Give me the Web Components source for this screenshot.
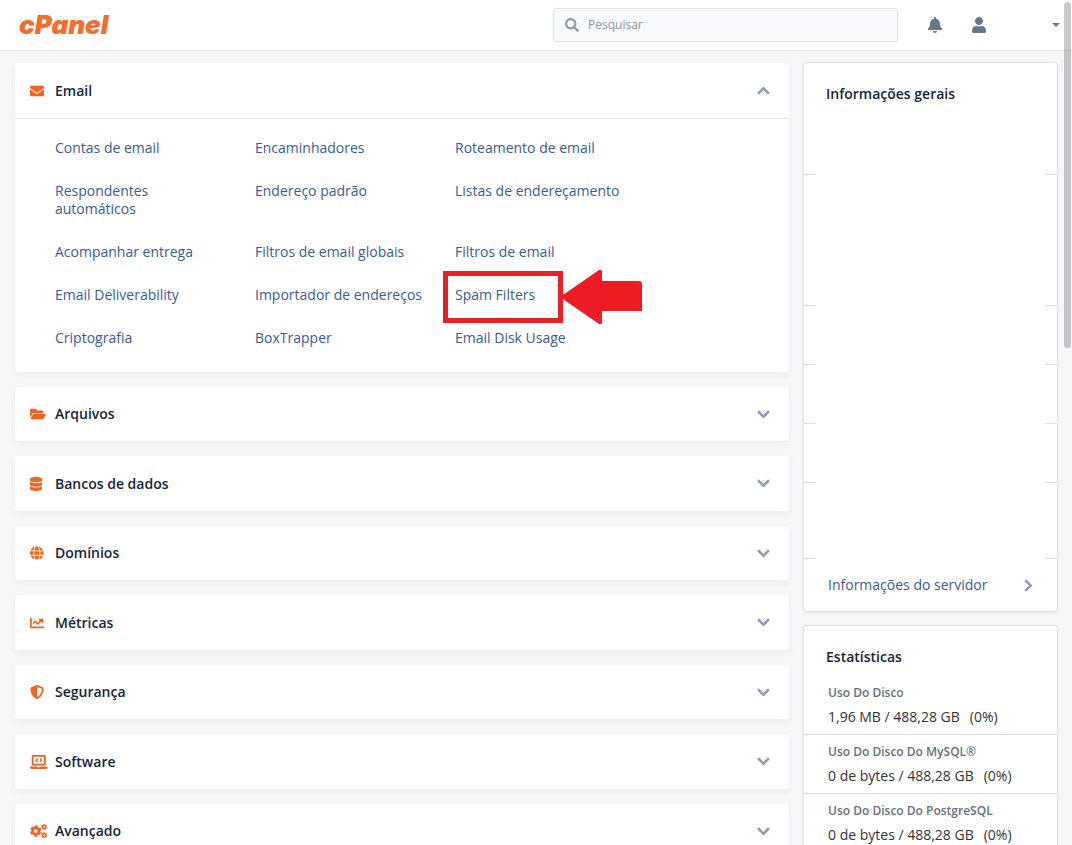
<!DOCTYPE html>
<html lang="pt-BR">
<head>
<meta charset="utf-8">
<meta name="viewport" content="width=device-width, initial-scale=1">
<title>cPanel</title>
<style>
  html, body { height: 100%; }
  body {
    margin: 0;
    overflow: hidden;
    background: #f6f7f9;
    color: #333;
    font: 14px/18px "Open Sans", "Noto Sans", sans-serif;
    --link: #3a5a96;
    --ink: #142538;
    --brand: #f4621f;
    --muted: #8f9bb3;
    --line: #e3e5e8;
  }
</style>
</head>
<body>
<cp-app>
  <cp-header slot="header"></cp-header>

  <cp-section icon="mail" heading="Email" open>
    <cp-link>Contas de email</cp-link>
    <cp-link>Encaminhadores</cp-link>
    <cp-link>Roteamento de email</cp-link>
    <cp-link>Respondentes automáticos</cp-link>
    <cp-link>Endereço padrão</cp-link>
    <cp-link>Listas de endereçamento</cp-link>
    <cp-link>Acompanhar entrega</cp-link>
    <cp-link>Filtros de email globais</cp-link>
    <cp-link>Filtros de email</cp-link>
    <cp-link>Email Deliverability</cp-link>
    <cp-link>Importador de endereços</cp-link>
    <cp-link marked>Spam Filters</cp-link>
    <cp-link>Criptografia</cp-link>
    <cp-link>BoxTrapper</cp-link>
    <cp-link>Email Disk Usage</cp-link>
  </cp-section>
  <cp-section icon="folder" heading="Arquivos"></cp-section>
  <cp-section icon="database" heading="Bancos de dados"></cp-section>
  <cp-section icon="globe" heading="Domínios"></cp-section>
  <cp-section icon="chart" heading="Métricas"></cp-section>
  <cp-section icon="shield" heading="Segurança"></cp-section>
  <cp-section icon="laptop" heading="Software"></cp-section>
  <cp-section icon="cogs" heading="Avançado"></cp-section>

  <cp-panel slot="aside" heading="Informações gerais">
    <cp-general-info></cp-general-info>
  </cp-panel>
  <cp-panel slot="aside" heading="Estatísticas">
    <cp-stat label="Uso Do Disco" value="1,96 MB / 488,28 GB" percent="(0%)"></cp-stat>
    <cp-stat label="Uso Do Disco Do MySQL®" value="0 de bytes / 488,28 GB" percent="(0%)"></cp-stat>
    <cp-stat label="Uso Do Disco Do PostgreSQL" value="0 de bytes / 488,28 GB" percent="(0%)"></cp-stat>
  </cp-panel>
</cp-app>

<script>
const ICONS = {
  mail: ['0 0 512 512', '<path d="M502.3 190.8c3.9-3.1 9.7-.2 9.7 4.7V400c0 26.5-21.5 48-48 48H48c-26.5 0-48-21.5-48-48V195.6c0-5 5.7-7.8 9.7-4.7 22.4 17.4 52.1 39.5 154.1 113.6 21.1 15.4 56.7 47.8 92.2 47.6 35.7.3 72-32.8 92.3-47.6 102-74.1 131.6-96.3 154-113.7zM256 320c23.2.4 56.6-29.2 73.4-41.4 132.7-96.3 142.8-104.7 173.4-128.7 5.8-4.5 9.2-11.5 9.2-18.9v-19c0-26.5-21.5-48-48-48H48c-26.5 0-48 21.5-48 48v19c0 7.4 3.4 14.3 9.2 18.9 30.6 23.9 40.7 32.4 173.4 128.7 16.8 12.2 50.2 41.8 73.4 41.4z"/>'],
  folder: ['0 0 576 512', '<path d="M572.7 292.1L500.3 416.2A64 64 0 0 1 445 448H45c-18.5 0-30-20.1-20.7-36.1l72.4-124.1A64 64 0 0 1 152 256h400c18.5 0 30 20.1 20.7 36.1zM152 224h328v-48c0-26.5-21.5-48-48-48H272l-64-64H48C21.5 64 0 85.5 0 112v278l69.1-118.4C86.2 242.3 118 224 152 224z"/>'],
  database: ['0 0 448 512', '<path d="M448 73.1v45.8C448 159.1 347.7 192 224 192S0 159.1 0 118.9V73.1C0 32.9 100.3 0 224 0s224 32.9 224 73.1zM448 176v102.9C448 319.1 347.7 352 224 352S0 319.1 0 278.9V176c48.1 33.1 136.2 48.6 224 48.6S399.9 209.1 448 176zm0 160v102.9C448 479.1 347.7 512 224 512S0 479.1 0 438.9V336c48.1 33.1 136.2 48.6 224 48.6S399.9 369.1 448 336z"/>'],
  globe: ['0 0 496 512', '<path d="M336.5 160C322 70.7 287.8 8 248 8s-74 62.7-88.5 152h177zM152 256c0 22.2 1.2 43.5 3.3 64h185.3c2.1-20.5 3.3-41.8 3.3-64s-1.2-43.5-3.3-64H155.3c-2.1 20.5-3.3 41.8-3.3 64zm324.7-96c-28.6-67.9-86.5-120.4-158-141.6 24.4 33.8 41.2 84.7 50 141.6h108zM177.2 18.4C105.8 39.6 47.8 92.1 19.3 160h108c8.7-56.9 25.5-107.8 49.9-141.6zM487.4 192H372.7c2.1 21 3.3 42.5 3.3 64s-1.2 43-3.3 64h114.6c5.5-20.5 8.6-41.8 8.6-64s-3.1-43.5-8.5-64zM120 256c0-21.5 1.2-43 3.3-64H8.6C3.2 212.5 0 233.8 0 256s3.2 43.5 8.6 64h114.6c-2-21-3.2-42.5-3.2-64zm39.5 96c14.5 89.3 48.7 152 88.5 152s74-62.7 88.5-152h-177zm159.3 141.6c71.4-21.2 129.4-73.7 158-141.6h-108c-8.8 56.9-25.6 107.8-50 141.6zM19.3 352c28.6 67.9 86.5 120.4 158 141.6-24.4-33.8-41.2-84.7-50-141.6h-108z"/>'],
  chart: ['0 0 512 512', '<path d="M496 384H64V80c0-8.8-7.2-16-16-16H16C7.2 64 0 71.2 0 80v336c0 17.7 14.3 32 32 32h464c8.8 0 16-7.2 16-16v-32c0-8.8-7.2-16-16-16zM464 96H345.9c-21.4 0-32 25.9-17 41l32.4 32.4L288 242.8l-73.4-73.4c-12.5-12.5-32.8-12.5-45.3 0l-68.6 68.7c-6.3 6.2-6.3 16.4 0 22.6l22.6 22.6c6.3 6.3 16.4 6.3 22.6 0l46.1-46 73.4 73.3c12.5 12.5 32.7 12.5 45.2 0l96-96 32.4 32.4c15.1 15.2 41 4.4 41-16.9V112c0-8.8-7.2-16-16-16z"/>'],
  shield: ['0 0 512 512', '<path d="M466.5 83.7l-192-80a48.2 48.2 0 0 0-36.9 0l-192 80C27.7 91.1 16 108.6 16 128c0 198.5 114.5 335.7 221.5 380.3 11.8 4.9 25.1 4.9 36.9 0C360.1 472.6 496 349.3 496 128c0-19.4-11.7-36.9-29.5-44.3zM256.1 446.3l-.1-381 175.9 73.3c-3.3 151.4-82.1 261.1-175.8 307.7z"/>'],
  laptop: ['0 0 640 512', '<path d="M255 261.7c6.3 6.2 16.4 6.2 22.7 0l11.3-11.4c6.2-6.2 6.2-16.3 0-22.6L253.3 192l35.7-35.7c6.2-6.3 6.2-16.4 0-22.7l-11.3-11.3c-6.3-6.2-16.4-6.2-22.7 0l-58.3 58.4c-6.3 6.2-6.3 16.3 0 22.6l58.3 58.4zm96-11.4l11.4 11.4c6.2 6.2 16.3 6.2 22.6 0l58.3-58.4c6.3-6.2 6.3-16.3 0-22.6L385 122.3c-6.3-6.2-16.4-6.2-22.6 0L351 133.6c-6.2 6.3-6.2 16.4 0 22.7l35.7 35.7-35.7 35.7c-6.2 6.3-6.2 16.4 0 22.6zM624 416H381.5c-.7 19.8-14.7 32-32.7 32H288c-18.7 0-33-17.5-32.8-32H16c-8.8 0-16 7.2-16 16v16c0 35.2 28.8 64 64 64h512c35.2 0 64-28.8 64-64v-16c0-8.8-7.2-16-16-16zM576 48c0-26.4-21.6-48-48-48H112C85.6 0 64 21.6 64 48v336h512V48zm-64 272H128V64h384v256z"/>'],
  cogs: ['0 0 640 512', '<g fill="none" stroke="currentColor"><circle cx="208" cy="256" r="116" stroke-width="96"/><circle cx="208" cy="256" r="176" stroke-width="64" pathLength="60" stroke-dasharray="6 4" stroke-dashoffset="-2"/><circle cx="520" cy="106" r="60" stroke-width="56"/><circle cx="520" cy="106" r="94" stroke-width="34" pathLength="60" stroke-dasharray="6 4"/><circle cx="520" cy="406" r="60" stroke-width="56"/><circle cx="520" cy="406" r="94" stroke-width="34" pathLength="60" stroke-dasharray="6 4"/></g>'],
  search: ['0 0 512 512', '<path d="M505 442.7L405.3 343c-4.5-4.5-10.6-7-17-7H372c27.6-35.3 44-79.7 44-128C416 93.1 322.9 0 208 0S0 93.1 0 208s93.1 208 208 208c48.3 0 92.7-16.4 128-44v16.3c0 6.4 2.5 12.5 7 17l99.7 99.7c9.4 9.4 24.6 9.4 33.9 0l28.3-28.3c9.4-9.4 9.4-24.6.1-34zM208 336c-70.7 0-128-57.2-128-128 0-70.7 57.2-128 128-128 70.7 0 128 57.2 128 128 0 70.7-57.2 128-128 128z"/>'],
  bell: ['0 0 448 512', '<path d="M224 512c35.3 0 64-28.7 64-64H160c0 35.3 28.7 64 64 64zm215.4-149.7c-19.3-20.8-55.5-52-55.5-154.3 0-77.7-54.5-139.9-127.9-155.2V32c0-17.7-14.3-32-32-32s-32 14.3-32 32v20.8C118.6 68.1 64.1 130.3 64.1 208c0 102.3-36.2 133.5-55.5 154.3-6 6.4-8.7 14.2-8.6 21.7.1 16.4 13 32 32.1 32h383.8c19.1 0 32-15.6 32.1-32 0-7.5-2.6-15.3-8.5-21.7z"/>'],
  user: ['0 0 448 512', '<path d="M224 256c70.7 0 128-57.3 128-128S294.7 0 224 0 96 57.3 96 128s57.3 128 128 128zm89.6 32h-16.7c-22.2 10.2-46.9 16-72.9 16s-50.6-5.8-72.9-16h-16.7C60.2 288 0 348.2 0 422.4V464c0 26.5 21.5 48 48 48h352c26.5 0 48-21.5 48-48v-41.6c0-74.2-60.2-134.4-134.4-134.4z"/>'],
  chevron: ['0 0 12 12', '<path d="M1 3l5 5 5-5" fill="none" stroke="currentColor" stroke-width="2.3"/>'],
  caret: ['0 0 8 4', '<path d="M0 0h8L4 4z"/>']
};

class CpElement extends HTMLElement {
  connectedCallback() {
    if (this.shadowRoot) return;
    this.attachShadow({ mode: 'open' }).innerHTML = this.render();
  }
  attr(name) { return this.getAttribute(name) || ''; }
}

customElements.define('cp-icon', class extends CpElement {
  render() {
    const [box, shape] = ICONS[this.attr('name')];
    return `<style>
      :host { display: inline-flex; height: 14px; flex: none; }
      svg { display: block; height: 100%; width: auto; fill: currentColor; }
    </style><svg viewBox="${box}" aria-hidden="true">${shape}</svg>`;
  }
});

customElements.define('cp-app', class extends CpElement {
  render() {
    return `<style>
      :host { display: flex; flex-direction: column; height: 100vh; }
      main {
        flex: 1; min-height: 0; overflow-y: auto; scrollbar-width: none;
        display: grid; grid-template-columns: minmax(0, 1fr) 255px; gap: 14px;
        align-items: start; padding: 12px 14px 15px 15px;
      }
      .sections {
        display: grid; gap: 15px;
        grid-template-rows: auto;
        grid-auto-rows: minmax(54px, auto) minmax(55px, auto);
      }
      aside { display: grid; gap: 13px; margin-top: -1px; }
      .thumb {
        position: fixed; top: 2px; right: 1px; width: 7px; height: 41vh;
        border-radius: 4px; background: rgba(100, 100, 105, .35);
      }
    </style>
    <slot name="header"></slot>
    <main><div class="sections"><slot></slot></div><aside><slot name="aside"></slot></aside></main>
    <div class="thumb"></div>`;
  }
});

customElements.define('cp-header', class extends CpElement {
  render() {
    return `<style>
      :host {
        display: flex; align-items: center; height: 50px; flex: none;
        background: #fff; border-bottom: 1px solid var(--line);
      }
      .logo {
        margin: 0 auto 0 19px; color: #f96b2b; text-decoration: none;
        font: italic 900 26px/32px Inter, "Liberation Sans", sans-serif;
      }
      .search {
        box-sizing: border-box; flex: 0 1 345px; height: 34px; margin-right: 15px;
        display: flex; align-items: center; gap: 9px; padding: 0 11px;
        background: #f7f9fc; border: 1px solid #dfe4eb; border-radius: 3px; color: var(--muted);
      }
      input {
        flex: 1; min-width: 0; border: 0; padding: 0; outline: 0; background: none;
        font: inherit; font-size: 12px; color: #333;
      }
      input::placeholder { color: #8e959f; opacity: 1; }
      button {
        width: 44px; height: 44px; padding: 0; border: 0; background: none; color: #68788c;
        display: flex; align-items: center; justify-content: center;
      }
      cp-icon { height: 16px; }
      .search cp-icon { height: 14px; }
      .account { width: 71px; box-sizing: border-box; justify-content: flex-end; padding-right: 12px; }
      .account cp-icon { height: 4px; }
    </style>
    <a class="logo" href="#">cPanel</a>
    <label class="search"><cp-icon name="search"></cp-icon><input type="search" placeholder="Pesquisar" aria-label="Pesquisar"></label>
    <button aria-label="Notificações"><cp-icon name="bell"></cp-icon></button>
    <button aria-label="Usuário"><cp-icon name="user"></cp-icon></button>
    <button class="account" aria-label="Conta"><cp-icon name="caret"></cp-icon></button>`;
  }
});

customElements.define('cp-section', class extends CpElement {
  render() {
    const open = this.hasAttribute('open');
    return `<style>
      :host {
        display: flex; flex-direction: column; background: #fff; border-radius: 3px;
        box-shadow: 0 3px 8px rgba(30, 40, 60, .05);
      }
      h2 { margin: 0; flex: 1; display: flex; font: inherit; }
      :host([open]) h2 { min-height: 55px; border-bottom: 1px solid var(--line); }
      button {
        flex: 1; display: flex; align-items: center; padding: 0 19px 0 15px;
        border: 0; background: none; color: var(--ink); font: inherit; font-weight: 600; text-align: left;
      }
      .glyph { display: flex; width: 25px; color: var(--brand); }
      .label { flex: 1; }
      .arrow { height: 13px; color: var(--muted); }
      :host([open]) .arrow { transform: rotate(180deg); }
      .links {
        display: grid; grid-template-columns: repeat(auto-fill, 170px); gap: 25px 30px;
        padding: 20px 40px 25px;
      }
    </style>
    <h2><button aria-expanded="${open}">
      <span class="glyph"><cp-icon name="${this.attr('icon')}"></cp-icon></span>
      <span class="label">${this.attr('heading')}</span>
      <cp-icon class="arrow" name="chevron"></cp-icon>
    </button></h2>
    ${open ? '<div class="links"><slot></slot></div>' : ''}`;
  }
});

customElements.define('cp-link', class extends CpElement {
  render() {
    const mark = this.hasAttribute('marked')
      ? `<span class="frame"></span>
         <svg class="pointer" viewBox="0 0 84 56" aria-hidden="true"><path d="M0 28L39 1q2-1 3 1V12H79q3 0 3 3V42H42V54q-1 2-3 1z"/></svg>`
      : '';
    return `<style>
      :host { display: block; position: relative; }
      a { color: var(--link); text-decoration: none; }
      .frame {
        position: absolute; left: -12px; top: -15px; width: 120px; height: 52px;
        box-sizing: border-box; border: 5px solid #e8202a; pointer-events: none;
      }
      .pointer { position: absolute; left: 105px; top: -17px; width: 84px; height: 56px; fill: #ed1c24; }
    </style><a href="#"><slot></slot></a>${mark}`;
  }
});

customElements.define('cp-panel', class extends CpElement {
  render() {
    return `<style>
      :host {
        display: block; background: #fff; border: 1px solid #dfe1e4; border-radius: 3px;
        box-shadow: 0 1px 3px rgba(30, 40, 60, .08);
      }
      h2 { margin: 0; padding: 22px 22px 10px; font: inherit; font-weight: 600; color: var(--ink); }
    </style><h2>${this.attr('heading')}</h2><slot></slot>`;
  }
});

customElements.define('cp-general-info', class extends CpElement {
  render() {
    return `<style>
      :host { display: block; }
      /* Blank rows keep only the two ends of their rule. */
      .row {
        height: 59px;
        background:
          linear-gradient(#dcdee1, #dcdee1) left bottom / 12px 1px no-repeat,
          linear-gradient(#dcdee1, #dcdee1) right bottom / 12px 1px no-repeat;
      }
      .first { height: 62px; }
      .tall { height: 131px; }
      .last { height: 76px; }
      a {
        display: flex; align-items: center; justify-content: space-between;
        height: 52px; padding: 0 22px 0 24px; color: var(--link); text-decoration: none;
      }
      cp-icon { height: 13px; color: var(--muted); transform: rotate(-90deg); }
    </style>
    <div class="row first"></div><div class="row tall"></div>
    <div class="row"></div><div class="row"></div><div class="row"></div>
    <div class="row last"></div>
    <a href="#">Informações do servidor <cp-icon name="chevron"></cp-icon></a>`;
  }
});

customElements.define('cp-stat', class extends CpElement {
  render() {
    return `<style>
      :host { display: block; border-bottom: 1px solid #dcdee1; }
      dl { margin: 0; padding: 8px 24px 8px; display: grid; gap: 6px; }
      dt { font-size: 12px; font-weight: 600; color: #66707d; }
      dd { margin: 0; display: flex; gap: 10px; }
    </style><dl><dt>${this.attr('label')}</dt><dd><span>${this.attr('value')}</span><span>${this.attr('percent')}</span></dd></dl>`;
  }
});
</script>
</body>
</html>
